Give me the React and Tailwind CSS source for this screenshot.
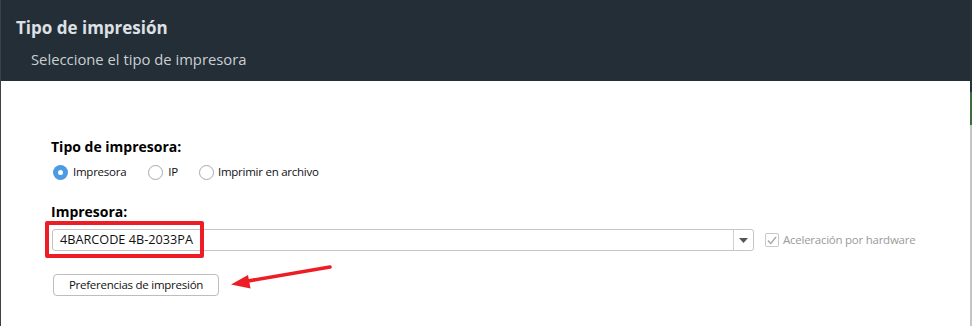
import React from "react";

export default function App() {
  const font = { fontFamily: '"Open Sans", "Noto Sans", sans-serif' };
  return (
    <div className="relative flex w-[972px] h-[326px] bg-white overflow-hidden" style={font}>
      <div className="w-px h-full bg-[#3a4248] shrink-0" />
      <div className="flex-1 flex flex-col min-w-0">
        <div className="h-[81px] bg-[#242e36] flex flex-col pl-[15px] pt-[16px]">
          <div className="text-[17px] font-bold text-[#dde1e5] leading-[24px]">Tipo de impresión</div>
          <div className="text-[14.8px] text-[#c9ced3] leading-[20px] pl-[15px] mt-[9px]">Seleccione el tipo de impresora</div>
        </div>
        <div className="flex-1 flex flex-col pl-[50px] pt-[56px]">
          <div className="text-[14px] font-bold text-black leading-[20px]">Tipo de impresora:</div>
          <div className="flex items-center mt-[5px] h-[20px] text-[11.5px] tracking-[-0.25px] text-[#111]">
            <div className="flex items-center">
              <span className="w-[15px] h-[15px] rounded-full bg-[#4c9be3] flex items-center justify-center ml-[2px]">
                <span className="w-[5px] h-[5px] rounded-full bg-white" />
              </span>
              <span className="ml-[5px]">Impresora</span>
            </div>
            <div className="flex items-center ml-[22px]">
              <span className="w-[15px] h-[15px] rounded-full border border-[#a9a9a9] bg-white" />
              <span className="ml-[5px]">IP</span>
            </div>
            <div className="flex items-center ml-[21px]">
              <span className="w-[15px] h-[15px] rounded-full border border-[#a9a9a9] bg-white" />
              <span className="ml-[4px]">Imprimir en archivo</span>
            </div>
          </div>
          <div className="text-[14px] font-bold text-black leading-[20px] mt-[20px]">Impresora:</div>
          <div className="flex items-center mt-[7px]">
            <div className="w-[702px] h-[22px] ml-[1px] border border-[#c4c4c4] rounded-[3px] flex items-stretch bg-white">
              <div className="flex-1 flex items-center pl-[7px] text-[12.7px] text-[#111]">4BARCODE 4B-2033PA</div>
              <div className="w-[20px] border-l border-[#d0d0d0] flex items-center justify-center">
                <svg width="9" height="5" viewBox="0 0 9 5"><path d="M0 0h9L4.5 5z" fill="#555" /></svg>
              </div>
            </div>
            <div className="ml-[11px] w-[14px] h-[14px] border border-[#c8c8c8] rounded-[2px] flex items-center justify-center bg-white">
              <svg width="10" height="9" viewBox="0 0 10 9"><path d="M1 4.5l2.8 3L9 1" fill="none" stroke="#a8a8a8" strokeWidth="1.4" /></svg>
            </div>
            <span className="ml-[4px] text-[11.5px] tracking-[-0.25px] text-[#9a9a9a]">Aceleración por hardware</span>
          </div>
          <div className="mt-[23px]">
            <button className="ml-[2px] w-[166px] h-[22px] border border-[#bdbdbd] rounded-[4px] bg-white text-[11.5px] tracking-[-0.25px] text-[#111] flex items-center justify-center">
              Preferencias de impresión
            </button>
          </div>
        </div>
      </div>
      <div className="w-[2px] h-full shrink-0 flex flex-col">
        <div className="h-[92px] bg-[#2a3238]" />
        <div className="h-[33px] bg-[#3d6b3d]" />
        <div className="flex-1 bg-[#c4c4c4]" />
      </div>
      <div className="absolute left-[45px] top-[221px] w-[159px] h-[37px] border-[4px] border-[#ee1c24] rounded-[2px] pointer-events-none" />
      <svg className="absolute left-0 top-0 pointer-events-none" width="972" height="326">
        <line x1="330" y1="267" x2="245" y2="281.5" stroke="#ee1c24" strokeWidth="3.5" strokeLinecap="round" />
        <path d="M231 284.5 L248 275 L250.5 288.5 Z" fill="#ee1c24" />
      </svg>
    </div>
  );
}
